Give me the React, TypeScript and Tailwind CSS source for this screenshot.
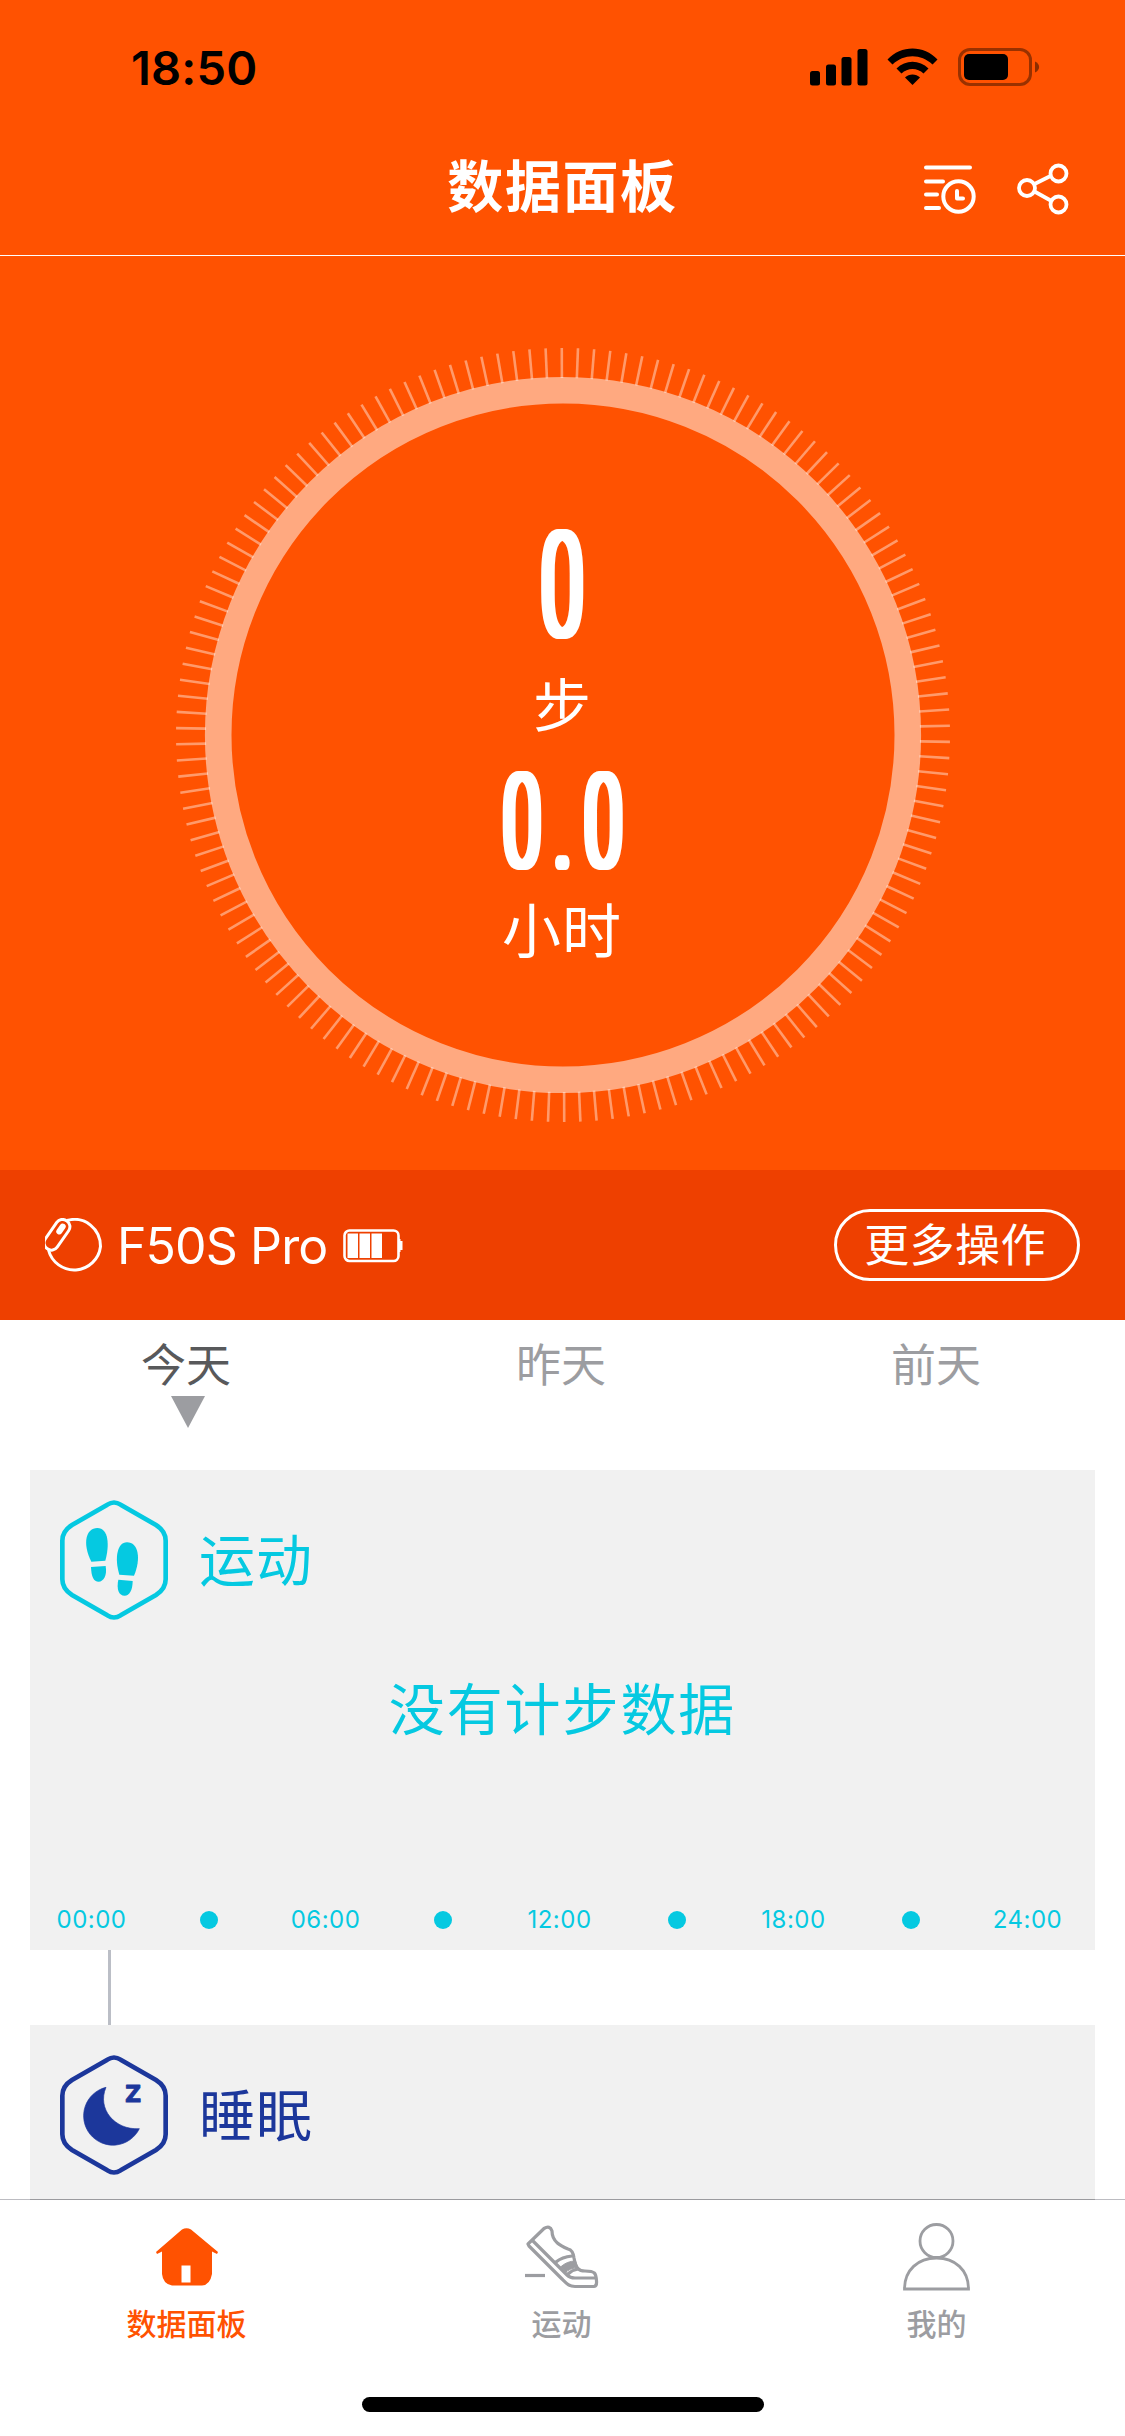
import type { ReactNode } from "react"

const TICK_COUNT = 150
const ticks = Array.from({ length: TICK_COUNT }, (_, i) => (i * 360) / TICK_COUNT - 0.18)

const days = [
  { label: "今天", active: true },
  { label: "昨天", active: false },
  { label: "前天", active: false },
]

const timeline = ["00:00", null, "06:00", null, "12:00", null, "18:00", null, "24:00"]

function StatusBar() {
  return (
    <div className="flex h-[120px] items-center justify-between pt-[14px] pr-[85px] pl-[131px]">
      <span className="font-[Inter] text-[47px] leading-none font-semibold tracking-[0.2px] text-black">18:50</span>
      <div className="flex items-center">
        <svg width="58" height="37" viewBox="0 0 58 37" className="mr-[19px]">
          <rect x="0" y="22" width="10" height="14.500" rx="2.500" />
          <rect x="16" y="15.500" width="10" height="21" rx="2.500" />
          <rect x="31.500" y="8" width="10" height="28.500" rx="2.500" />
          <rect x="47.500" y="0" width="10" height="36.500" rx="2.500" />
        </svg>
        <svg width="51" height="38" viewBox="0 0 51 38" className="mr-[20px]">
          <path d="M0.500 11.500 C14 -3.200 37 -3.200 50.500 11.500 L45.500 16.500 C34 5.500 17 5.500 5.500 16.500 Z" />
          <path d="M9.500 20.500 C18.500 11.500 32.500 11.500 41.500 20.500 L36.500 25.500 C30.500 19.500 20.500 19.500 14.500 25.500 Z" />
          <path d="M18 29.500 C22 25.500 29 25.500 33 29.500 L25.500 37 Z" />
        </svg>
        <svg width="82" height="38" viewBox="0 0 82 38">
          <rect x="1.500" y="1.500" width="71" height="35" rx="10.500" fill="none" stroke="#000" strokeOpacity="0.4" strokeWidth="3" />
          <rect x="6" y="6" width="44" height="26" rx="5" />
          <path d="M77 13.500 C82.500 16 82.500 22 77 24.500 Z" fillOpacity="0.45" />
        </svg>
      </div>
    </div>
  )
}

function TitleBar() {
  return (
    <div className="grid h-[135px] grid-cols-[1fr_auto_1fr] items-center text-white">
      <span />
      <h1 className="pb-[9px] text-[56px] leading-none font-bold tracking-[1.600px]">数据面板</h1>
      <div className="flex items-center justify-end gap-[41px] pt-[3px] pr-[56px]">
        <svg width="52" height="49" viewBox="0 0 52 49" fill="none" stroke="currentColor" strokeWidth="4" strokeLinecap="round">
          <path d="M2 2.500H46M2 16.500H19M2 29.500H13M2 43H15" />
          <circle cx="34.500" cy="31.500" r="19" fill="#ff5201" stroke="none" />
          <circle cx="34.500" cy="31.500" r="15.200" />
          <path d="M33 26V33.500H39" strokeLinejoin="round" />
        </svg>
        <svg width="52" height="52" viewBox="0 0 52 52" fill="none" stroke="currentColor" strokeWidth="3.800">
          <circle cx="10" cy="25" r="8" />
          <circle cx="41.500" cy="10.500" r="8" />
          <circle cx="41.500" cy="41.500" r="8" />
          <path d="M17.500 21L34.500 12.500M17.500 28.500L34.500 38" />
        </svg>
      </div>
    </div>
  )
}

function StepRing() {
  return (
    <section className="grid h-[914px] justify-items-center pt-[89px] text-white">
      <svg width="780" height="780" viewBox="-390 -390 780 780" className="col-start-1 row-start-1">
        <circle r="344.800" fill="none" stroke="#fff" strokeOpacity="0.5" strokeWidth="26.600" />
        {ticks.map((angle) => (
          <line
            key={angle}
            y1="-387"
            y2="-357"
            stroke="#fff"
            strokeOpacity="0.42"
            strokeWidth="2.600"
            transform={`rotate(${angle})`}
          />
        ))}
      </svg>
      <div className="col-start-1 row-start-1 flex flex-col items-center pt-[188px]">
        <span className="h-[109px] scale-x-[0.530] font-[Roboto] text-[150px] leading-[109px] font-normal [text-shadow:3px_0_#fff,-3px_0_#fff,6px_0_#fff,-6px_0_#fff]">
          0
        </span>
        <span className="mt-[24px] h-[72px] pr-[1px] text-[58px] leading-[72px]">步</span>
        <span className="mt-[36px] h-[98px] scale-x-[0.530] pl-[21px] font-[Roboto] text-[135px] leading-[98px] font-normal tracking-[21px] [text-shadow:3px_0_#fff,-3px_0_#fff,6px_0_#fff,-6px_0_#fff]">
          0.0
        </span>
        <span className="mt-[20px] h-[72px] pr-[1px] text-[59px] leading-[72px] tracking-[1px]">小时</span>
      </div>
    </section>
  )
}

function DeviceBar() {
  return (
    <section className="flex h-[150px] items-center justify-between bg-[#ee4000] pr-[45px] pl-[45px] text-white">
      <div className="flex items-center pt-[2px]">
        <svg width="58" height="57" viewBox="0 0 58 57" fill="none" stroke="currentColor" strokeWidth="3">
          <path d="M22 2.500 C40 -2.500 55.500 11 55.500 28.500 A26.500 26.500 0 0 1 3.500 32" />
          <rect x="4.500" y="0.500" width="14.500" height="34" rx="7" transform="rotate(35 13 17.500)" />
          <rect x="14.500" y="6.500" width="3" height="9" rx="1.500" transform="rotate(35 16 11)" />
        </svg>
        <span className="ml-[14px] font-[Inter] text-[50px] leading-none tracking-[-0.900px]">F50S Pro</span>
        <svg width="60" height="34" viewBox="0 0 60 34" className="ml-[16px]">
          <rect x="1.500" y="1.500" width="54" height="30.500" rx="5" fill="none" stroke="#fff" strokeWidth="2.600" />
          <path d="M4.500 4.500H15V29H4.500ZM16.500 4.500H27V29H16.500ZM28.500 4.500H39V29H28.500ZM55.500 10H57.500V12H59.500V21H57.500V23H55.500Z" fill="#fff" />
        </svg>
      </div>
      <button className="flex h-[72px] w-[246px] items-center justify-center rounded-full border-[3px] border-white pr-[4px] pb-[5px] text-[45px] leading-none tracking-[0.4px]">
        更多操作
      </button>
    </section>
  )
}

function DayTabs() {
  return (
    <nav className="grid h-[150px] grid-cols-3 pt-[20px] text-[45px] leading-none">
      {days.map((day) => (
        <div key={day.label} className="flex flex-col items-center">
          <span className={day.active ? "pr-[3px] text-[#58595b]" : "pr-[3px] text-[#9c9da1]"}>{day.label}</span>
          {day.active && (
            <svg width="34" height="32" viewBox="0 0 34 32" className="mt-[11px]">
              <path d="M0 0H34L17 32Z" fill="#9c9da1" />
            </svg>
          )}
        </div>
      ))}
    </nav>
  )
}

function HexIcon({ children }: { children: ReactNode }) {
  return (
    <svg width="108" height="120" viewBox="0 0 324 360" fill="currentColor">
      <path
        d="M142 14 Q162 1 182 14 L288 75 Q317 93 317 122 V238 Q317 267 288 285 L182 346 Q162 359 142 346 L36 285 Q7 267 7 238 V122 Q7 93 36 75 Z"
        fill="none"
        stroke="currentColor"
        strokeWidth="14"
      />
      {children}
    </svg>
  )
}

function StepsCard() {
  return (
    <section className="flex h-[480px] flex-col bg-[#f1f1f1] pt-[30px] text-[#05c9e1]">
      <div className="flex items-center gap-[31px] pl-[30px]">
        <HexIcon>
          <path d="M94 185 C66 130 78 84 112 84 C146 84 149 136 136 182 Z" />
          <path d="M93 201 L137 198 C142 228 130 245 116 245 C101 245 94 231 93 201 Z" />
          <path d="M178 224 C163 176 171 127 201 127 C235 127 244 176 222 227 Z" />
          <path d="M175 239 L218 243 C218 271 208 287 194 287 C176 287 169 267 175 239 Z" />
        </HexIcon>
        <h2 className="pb-[6px] text-[56px] leading-none tracking-[1px]">运动</h2>
      </div>
      <p className="mt-[58px] text-center text-[56px] leading-none tracking-[1.900px]">没有计步数据</p>
      <div className="mt-auto mr-[9px] mb-[15px] ml-[3px] grid grid-cols-9 items-center justify-items-center">
        {timeline.map((label, i) =>
          label ? (
            <span key={i} className="font-[Inter] text-[24px] leading-[30px] tracking-[0.500px]">{label}</span>
          ) : (
            <span key={i} className="h-[18px] w-[18px] rounded-full bg-[#05c9e1]" />
          )
        )}
      </div>
    </section>
  )
}

function SleepCard() {
  return (
    <section className="h-[174px] bg-[#f1f1f1] pt-[30px] text-[#1c379b]">
      <div className="flex items-center gap-[31px] pl-[30px]">
        <HexIcon>
          <path d="M138 97 A88 88 0 1 0 238 221 C165 226 110 162 138 97 Z" stroke="currentColor" strokeWidth="2" strokeLinejoin="round" />
          <text
            x="219"
            y="141"
            textAnchor="middle"
            stroke="currentColor"
            strokeWidth="3"
            strokeLinejoin="round"
            className="font-[Inter] text-[94px] font-semibold"
          >
            z
          </text>
        </HexIcon>
        <h2 className="pb-[6px] text-[56px] leading-none tracking-[1px]">睡眠</h2>
      </div>
    </section>
  )
}

function HomeIcon() {
  return (
    <svg width="62" height="58" viewBox="0 0 62 58" fill="#ff5201">
      <path d="M0 24 L26 1.500 Q30.500 -1 35 1.500 L62 24 L61 26 L56 23.500 V46 Q54 57 46 57.500 H16 Q7 56 6 46 V23.500 L1 26 Z" />
      <rect x="25.500" y="37.500" width="9" height="17" fill="#fff" />
    </svg>
  )
}

function ShoeIcon() {
  return (
    <svg width="75" height="64" viewBox="-1 0 75 64" fill="none" stroke="#9c9da1" strokeWidth="3.200" strokeLinejoin="round" strokeLinecap="round">
      <path d="M3 19 L19 3.500 Q25 0 27 6 C27 17 36 21 43 24 Q48 25 49 33 C51 44 54 46 60 46 C70 46 71 48 71.500 56 Q72 61 69 61.500 H50 C44 61.500 41 58 37 54 L4 21 Z" />
      <path d="M8 16 L42 50 Q45 53 50 53 H70" />
      <path d="M31 37 Q37 32 47 31M43 49 Q47 45 53 44" />
      <path d="M35.500 42 Q42 36 50.500 36 L52.500 42 Q44 44 40.500 47 Z" fill="#9c9da1" strokeWidth="1" />
      <path d="M0 50.500H20" strokeLinecap="butt" />
    </svg>
  )
}

function PersonIcon() {
  return (
    <svg width="67" height="68" viewBox="0 0 67 68" fill="none" stroke="#9c9da1" strokeWidth="2.800">
      <circle cx="33.500" cy="18" r="16.500" />
      <path d="M1.500 66 C1.500 47 15 35 33.500 35 C52 35 65.500 47 65.500 66 Z" />
    </svg>
  )
}

function TabItem({ icon, label, active }: { icon: ReactNode; label: string; active?: boolean }) {
  return (
    <div className="flex flex-col items-center pr-[2px]">
      <div className="flex h-[107px] items-center pt-[6px]">{icon}</div>
      <span className={active ? "text-[#ff5201]" : undefined}>{label}</span>
    </div>
  )
}

function TabBar() {
  return (
    <footer className="flex h-[237px] flex-col bg-white">
      <div className="bg-[#bdbdc2] px-[30px]">
        <div className="h-px bg-[#9b9b9f]" />
      </div>
      <div className="grid grid-cols-3 text-[30px] leading-none font-medium text-[#9c9da1]">
        <TabItem icon={<HomeIcon />} label="数据面板" active />
        <TabItem icon={<ShoeIcon />} label="运动" />
        <TabItem icon={<PersonIcon />} label="我的" />
      </div>
      <div className="mx-auto mt-auto mb-[24px] h-[15px] w-[402px] rounded-full bg-black" />
    </footer>
  )
}

export default function App() {
  return (
    <div className="flex h-[2436px] w-[1125px] flex-col overflow-hidden bg-white font-['Noto_Sans_CJK_SC',sans-serif]">
      <div className="bg-[#ff5201]">
        <header className="border-b border-white">
          <StatusBar />
          <TitleBar />
        </header>
        <StepRing />
        <DeviceBar />
      </div>
      <DayTabs />
      <main className="flex flex-1 flex-col px-[30px]">
        <StepsCard />
        <div className="ml-[78px] h-[75px] w-[3px] bg-[#bbbec6]" />
        <SleepCard />
      </main>
      <TabBar />
    </div>
  )
}
